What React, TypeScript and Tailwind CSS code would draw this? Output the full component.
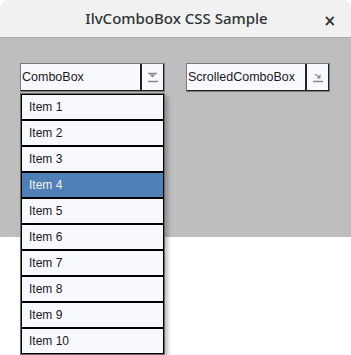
import React from 'react';

const ITEMS = ['Item 1', 'Item 2', 'Item 3', 'Item 4', 'Item 5', 'Item 6', 'Item 7', 'Item 8', 'Item 9', 'Item 10'];

const DropIcon: React.FC = () => (
  <svg width="12" height="11" viewBox="0 0 12 11">
    <path d="M1 1.5h9" stroke="#8a8a8a" strokeWidth="1.5" />
    <path d="M2.5 2.5h6l-3 3z" fill="#8a8a8a" />
    <path d="M1 9.5h10" stroke="#8a8a8a" strokeWidth="1.5" />
  </svg>
);

const ScrollIcon: React.FC = () => (
  <svg width="12" height="11" viewBox="0 0 12 11">
    <path d="M3 2l4 3" stroke="#8a8a8a" strokeWidth="1.2" />
    <path d="M8.5 2v4.5h-4z" fill="#8a8a8a" />
    <path d="M1 9.5h10" stroke="#8a8a8a" strokeWidth="1.5" />
  </svg>
);

const Combo: React.FC<{ label: string; width: string; icon: React.ReactNode }> = ({ label, width, icon }) => (
  <div className={`flex h-[29px] ${width} border border-[#7a7a7a] bg-[#f8f8ff]`}>
    <div className="flex-1 flex items-center pl-[1px] border-r-2 border-b border-[#222] text-[12.5px] text-[#1a1a1a]">
      {label}
    </div>
    <div className="w-[22px] flex items-center justify-center border-r border-b border-[#222]">{icon}</div>
  </div>
);

export default function App() {
  return (
    <div className="relative w-[351px] h-[355px] bg-white overflow-hidden" style={{ fontFamily: '"Liberation Sans", Arial, sans-serif' }}>
      {/* title bar */}
      <div className="h-[38px] bg-[#f1f1f1] rounded-t-[8px] border-b border-[#a9a9a9] flex items-center relative">
        <div className="flex-1 text-center text-[15px] font-medium text-[#2e3436] pl-[2px]" style={{ fontFamily: '"Noto Sans", sans-serif' }}>
          IlvComboBox CSS Sample
        </div>
        <span className="absolute right-[15px] top-[10px] text-[15px] font-bold text-[#2e3436]" style={{ fontFamily: '"DejaVu Sans", sans-serif' }}>×</span>
      </div>

      {/* content */}
      <div className="h-[199px] bg-[#bebebe] flex items-start gap-[21px] pl-[20px] pt-[25px]">
        <Combo label="ComboBox" width="w-[145px]" icon={<DropIcon />} />
        <Combo label="ScrolledComboBox" width="w-[144px]" icon={<ScrollIcon />} />
      </div>

      {/* popup list */}
      <div className="absolute top-[93px] left-[20px] w-[145px] border border-[#6a6a6a] shadow-[3px_3px_4px_rgba(0,0,0,0.25)]">
        {ITEMS.map((item, i) => (
          <div
            key={item}
            className={`h-[26px] border border-black flex items-center pl-[7px] text-[12px] ${
              i === 3 ? 'bg-[#4e7fb5] text-[#f2f2f2]' : 'bg-[#f8f8ff] text-[#1a1a1a]'
            }`}
          >
            {item}
          </div>
        ))}
      </div>
    </div>
  );
}
